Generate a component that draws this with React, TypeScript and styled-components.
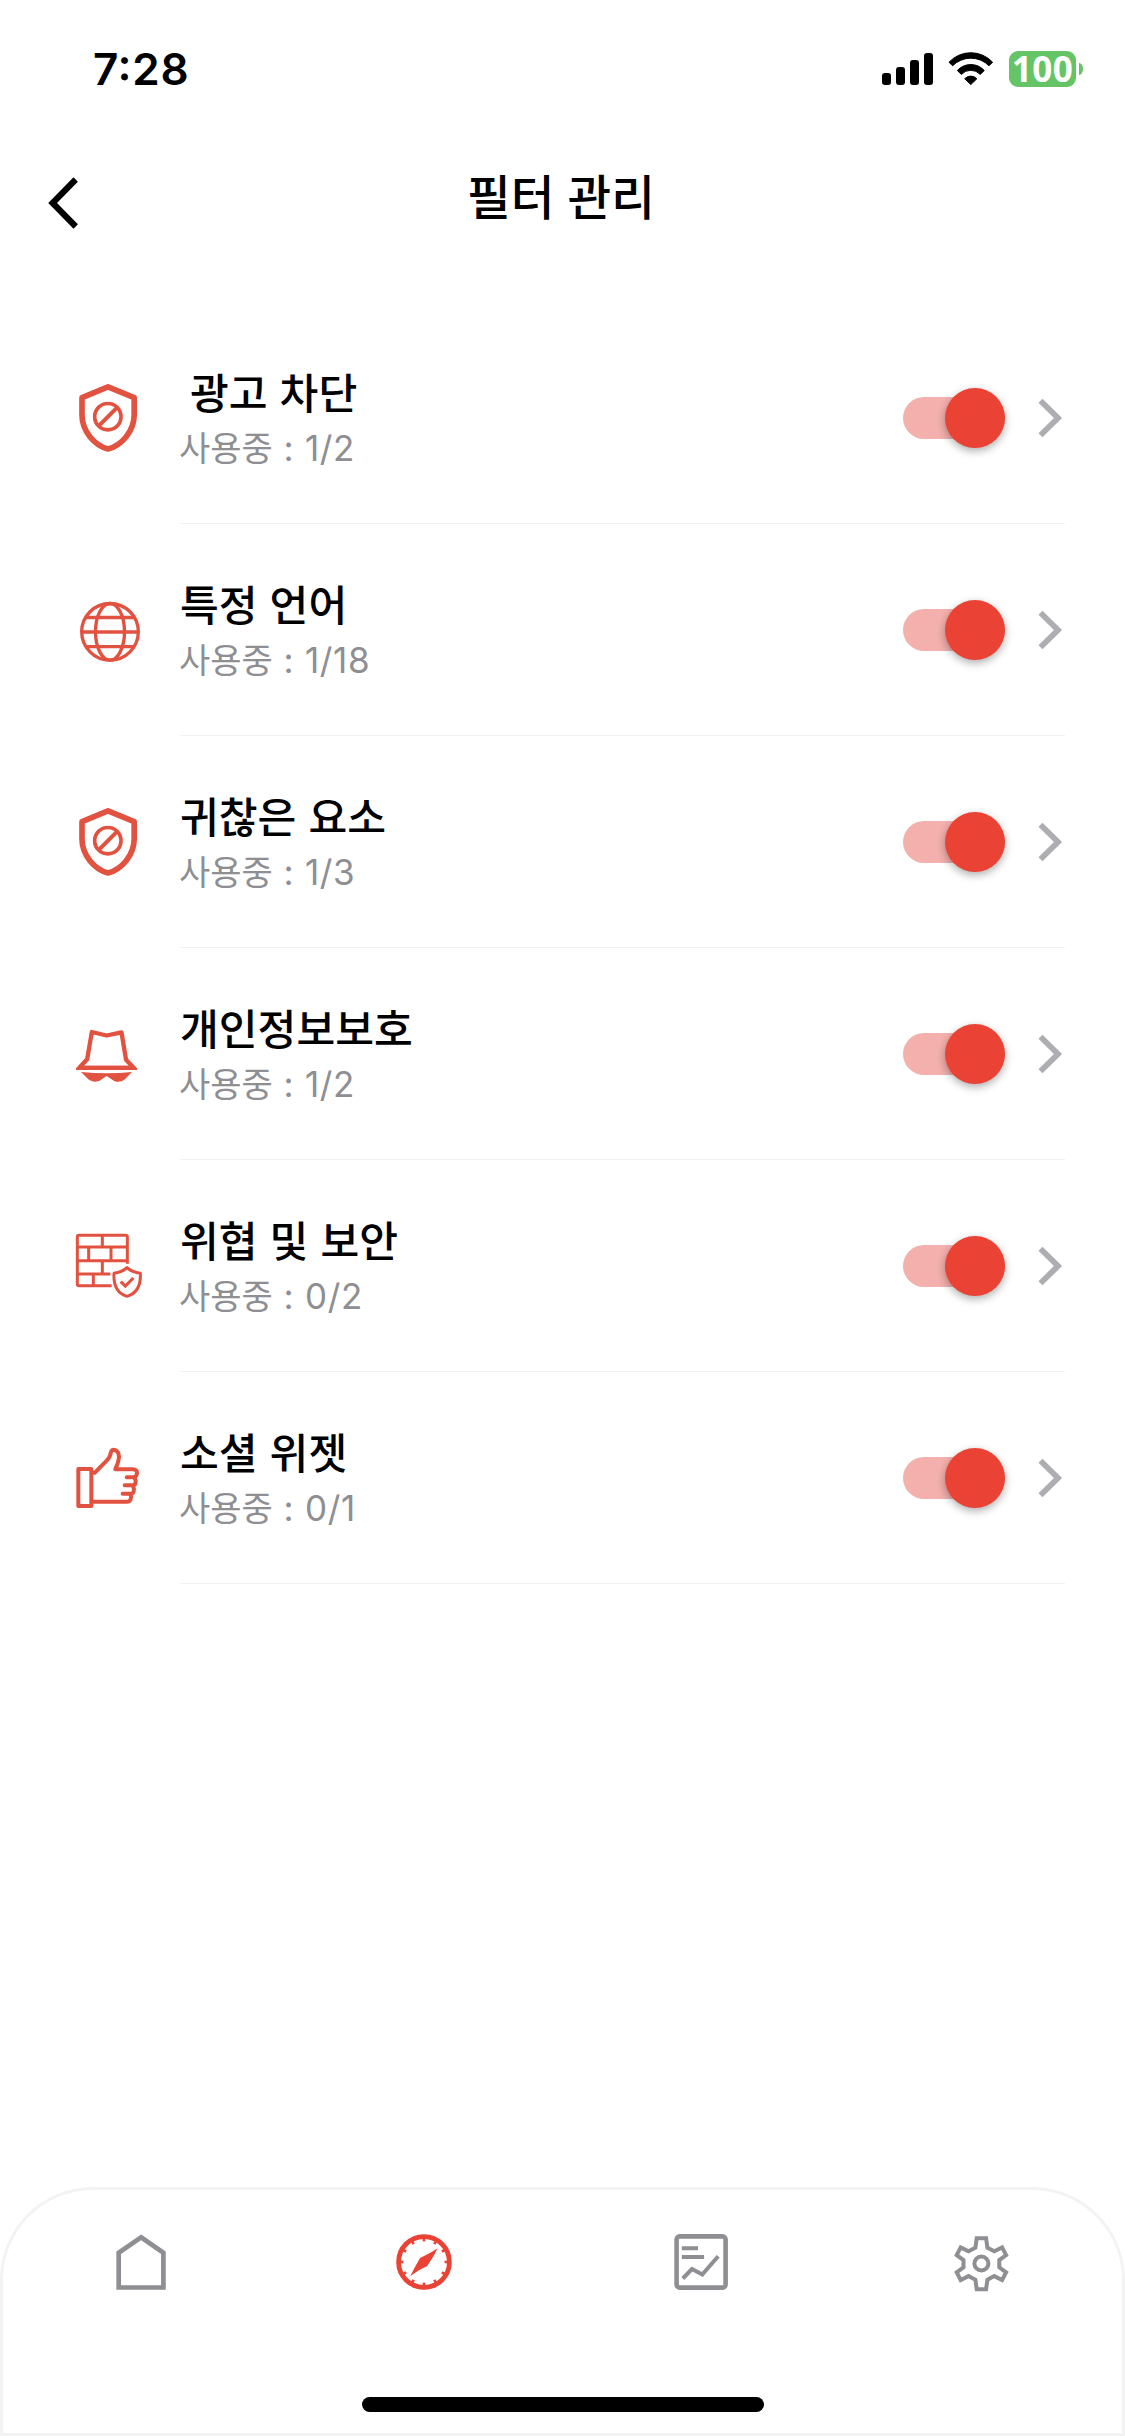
import React, { useState } from "react";
import styled, { createGlobalStyle } from "styled-components";

const GlobalStyle = createGlobalStyle`
  * { box-sizing: border-box; }
  body { margin: 0; background: #fff; }
`;

const accent = "#ea4335";
const iconRed = "#e25240";
const grey = "#8e8e93";

const Screen = styled.div`
  width: 1125px;
  height: 2436px;
  display: flex;
  flex-direction: column;
  background: #fff;
  color: #000;
  overflow: hidden;
  font-family: Inter, "Noto Sans CJK KR", sans-serif;
`;

const StatusBar = styled.div`
  height: 138px;
  padding: 0 42px 0 93px;
  display: flex;
  justify-content: space-between;
  align-items: center;
`;

const Clock = styled.span`
  font-size: 44px;
  font-weight: 600;
  line-height: 50px;
  letter-spacing: 0.7px;
  font-feature-settings: "case";
`;

const StatusIcons = styled.div`
  display: flex;
  align-items: center;
`;

const Signal = styled.div`
  display: flex;
  align-items: flex-end;
  gap: 5px;
  margin-right: 15px;
`;

const Bar = styled.i<{ $h: number }>`
  width: 9px;
  height: ${(p) => p.$h}px;
  border-radius: 3px;
  background: #000;
`;

const Battery = styled.div`
  margin-left: 15px;
  width: 67px;
  height: 36px;
  border-radius: 9px;
  background: #65c466;
  color: #fff;
  font-family: "Open Sans", sans-serif;
  font-size: 35px;
  font-weight: 700;
  line-height: 36px;
  letter-spacing: 0.4px;
  text-align: center;
`;

const BatteryTip = styled.i`
  margin-left: 3px;
  width: 4px;
  height: 12px;
  border-radius: 0 4px 4px 0 / 0 6px 6px 0;
  background: #65c466;
`;

const Header = styled.header`
  height: 174px;
  padding: 0 48px;
  display: grid;
  grid-template-columns: 60px 1fr 60px;
  align-items: start;
`;

const BackButton = styled.button`
  margin: 38px 0 0;
  padding: 0;
  border: 0;
  width: 32px;
  height: 54px;
  background: none;
  svg { display: block; }
`;

const PageTitle = styled.h1`
  margin: 28px 0 0;
  padding-right: 3px;
  text-align: center;
  font-family: "Noto Sans CJK KR", sans-serif;
  font-size: 47.5px;
  line-height: 58px;
  font-weight: 500;
  word-spacing: 2.5px;
`;

const List = styled.main`
  flex: 1;
  padding: 0 60px 0 72px;
`;

const Row = styled.section`
  height: 212px;
  display: grid;
  grid-template-columns: 72px 885px;
  column-gap: 36px;
  align-items: center;
`;

const RowIcon = styled.svg`
  width: 72px;
  height: 72px;
  fill: none;
  stroke: ${iconRed};
  stroke-linejoin: round;
`;

const RowBody = styled.div`
  height: 212px;
  border-bottom: 1px solid #f2f2f2;
  display: flex;
  align-items: center;
`;

const Labels = styled.div`
  flex: 1;
  height: 212px;
  padding-top: 54px;
`;

const Name = styled.div<{ $indent?: boolean }>`
  padding-left: ${(p) => (p.$indent ? 10 : 0)}px;
  font-family: "Noto Sans CJK KR", sans-serif;
  font-size: 42.2px;
  font-weight: 500;
  line-height: 50px;
  word-spacing: 2.5px;
  white-space: nowrap;
`;

const Usage = styled.div`
  display: flex;
  align-items: baseline;
  margin-top: 6px;
  color: ${grey};
  font-size: 35px;
  line-height: 50px;
  white-space: pre;
`;

const UsageLabel = styled.span`
  font-family: "Noto Sans CJK KR", sans-serif;
  font-size: 34px;
  margin-left: -1px;
`;

const UsageCount = styled.span`
  letter-spacing: 0.6px;
  word-spacing: 0.3px;
`;

const Track = styled.button<{ $on: boolean }>`
  padding: 0;
  border: 0;
  width: 102px;
  height: 42px;
  border-radius: 21px;
  display: flex;
  align-items: center;
  justify-content: ${(p) => (p.$on ? "flex-end" : "flex-start")};
  background: ${(p) => (p.$on ? "#f3b0ad" : "#d1d1d6")};
`;

const Thumb = styled.i<{ $on: boolean }>`
  width: 60px;
  height: 60px;
  flex: none;
  border-radius: 50%;
  background: ${(p) => (p.$on ? accent : "#fff")};
  box-shadow: 0 3px 9px rgba(0, 0, 0, 0.32);
`;

const Chevron = styled.svg`
  width: 27px;
  height: 42px;
  margin: 0 1px 0 32px;
  fill: none;
  stroke: #aeaeb2;
  stroke-width: 5.8;
`;

const TabBar = styled.nav`
  height: 249px;
  border: 3px solid #f3f3f3;
  border-radius: 93px 93px 0 0;
  display: flex;
  flex-direction: column;
  align-items: center;
  justify-content: space-between;
  padding: 42px 0 21px;
`;

const Tabs = styled.div`
  align-self: flex-start;
  display: flex;
  gap: 220px;
  padding-left: 109px;
`;

const TabIcon = styled.svg<{ $active?: boolean }>`
  width: 60px;
  height: 60px;
  display: block;
  fill: none;
  color: ${(p) => (p.$active ? accent : grey)};
  stroke: currentColor;
`;

const HomeIndicator = styled.div`
  width: 402px;
  height: 15px;
  border-radius: 8px;
  background: #000;
`;

const ShieldIcon = () => (
  <RowIcon viewBox="66 96 216 216">
    <path d="M174 110.500 L252.500 143 V196 C252.500 243 215 286 174 297 C133 286 96 243 96 196 V143 Z" strokeWidth="17" />
    <circle cx="173.500" cy="200" r="39.500" strokeWidth="11" />
    <path d="M147 227 L201 173" strokeWidth="12" />
  </RowIcon>
);

const GlobeIcon = () => (
  <RowIcon viewBox="66 102 216 216" strokeWidth="10">
    <circle cx="180" cy="215.500" r="85" />
    <ellipse cx="180" cy="215.500" rx="43.500" ry="85" />
    <path d="M107 172.500 H253 M94 216 H266 M107 260 H253" />
  </RowIcon>
);

const HatIcon = () => (
  <RowIcon viewBox="66 114 216 216">
    <path d="M125.500 156 L170 166.500 L214.500 157 L228 239 L251 263.500 H88 L111.500 238 Z" strokeWidth="13" />
    <path d="M78 264 V270 H261 V264 L250 257 H89 Z" fill={iconRed} stroke="none" />
    <path d="M93 276 Q132 280 170 280 Q208 280 246 276 L225 298 C214 307 200 308 189 301 L170 288 L151 301 C140 308 125 306 115 298 Z" fill={iconRed} stroke="none" />
  </RowIcon>
);

const FirewallIcon = () => (
  <RowIcon viewBox="66 120 216 216" strokeWidth="9">
    <path d="M232 221 V141 Q232 136 227 136 H87 Q82 136 82 141 V282 Q82 287 87 287 H185" />
    <path d="M82 171 H232 M82 212 H232 M82 252 H181 M157 136 V171 M116 171 V212 M183 171 V212 M157 212 V252 M130 252 V287" />
    <path d="M231 233 C221 243 206 248 192 250 C190 284 201 310 231 319 C261 310 273 284 271 250 C257 248 241 243 231 233 Z" />
    <path d="M212 275 L226 288 L250 264" strokeWidth="9.500" strokeLinejoin="miter" />
  </RowIcon>
);

const ThumbIcon = () => (
  <RowIcon viewBox="66 126 216 216" strokeWidth="12" strokeLinecap="round">
    <rect x="85" y="207" width="39" height="111" />
    <path d="M130 218.500 L134 218.500 L170 182 Q181 171 183 156 Q185 149 191 149 C205 150 210 166 205 183 Q202 196 196 206.500 L196 207.500 H248 C258 208 262 213 261 220 C260 228 257 232 250 232 H230 M252 232 C260 240 258 256 248 256 H224 M248 257 C254 266 253 281 243 281 H218 M242 282 C246 294 241 305.500 231 305.500 H130" />
  </RowIcon>
);

interface Filter {
  name: string;
  usage: string;
  icon: React.ReactNode;
  indent?: boolean;
}

const filters: Filter[] = [
  { name: "광고 차단", usage: "1/2", icon: <ShieldIcon />, indent: true },
  { name: "특정 언어", usage: "1/18", icon: <GlobeIcon /> },
  { name: "귀찮은 요소", usage: "1/3", icon: <ShieldIcon /> },
  { name: "개인정보보호", usage: "1/2", icon: <HatIcon /> },
  { name: "위협 및 보안", usage: "0/2", icon: <FirewallIcon /> },
  { name: "소셜 위젯", usage: "0/1", icon: <ThumbIcon /> },
];

function FilterRow({ name, usage, icon, indent }: Filter) {
  const [on, setOn] = useState(true);
  return (
    <Row>
      {icon}
      <RowBody>
        <Labels>
          <Name $indent={indent}>{name}</Name>
          <Usage>
            <UsageLabel>사용중</UsageLabel>
            <UsageCount> : {usage}</UsageCount>
          </Usage>
        </Labels>
        <Track $on={on} onClick={() => setOn(!on)}>
          <Thumb $on={on} />
        </Track>
        <Chevron viewBox="0 0 27 42">
          <path d="M3.500 3.700 L21 21 L3.500 38.300" />
        </Chevron>
      </RowBody>
    </Row>
  );
}

const gearOutline =
  "M-4.700 -25.500 L4.700 -25.500 L6 -16 L12.900 -12.400 L20.700 -16.300 L24.700 -8.600 L17.900 -3.600 L17.900 3.600 L24.700 8.600 L20.700 16.300 L12.900 12.400 L6 16 L4.700 25.500 L-4.700 25.500 L-6 16 L-12.900 12.400 L-20.700 16.300 L-24.700 8.600 L-17.900 3.600 L-17.900 -3.600 L-24.700 -8.600 L-20.700 -16.300 L-12.900 -12.400 L-6 -16 Z";

export default function App() {
  return (
    <Screen>
      <GlobalStyle />
      <StatusBar>
        <Clock>7:28</Clock>
        <StatusIcons>
          <Signal>
            <Bar $h={12} />
            <Bar $h={18} />
            <Bar $h={25} />
            <Bar $h={32} />
          </Signal>
          <svg width="46" height="34" viewBox="0 0 46 34" stroke="#000" strokeWidth="1" strokeLinejoin="round">
            <path d="M1 10.200 A29.800 29.800 0 0 1 44.600 10.200 L41 13.800 A25.500 25.500 0 0 0 4.600 13.800 Z" />
            <path d="M9.300 18.500 A18.200 18.200 0 0 1 36.300 18.500 L32.200 22.400 A12.800 12.800 0 0 0 13.400 22.400 Z" />
            <path d="M16.700 26.700 A8.500 8.500 0 0 1 28.900 26.700 L22.800 32.600 Z" />
          </svg>
          <Battery>100</Battery>
          <BatteryTip />
        </StatusIcons>
      </StatusBar>

      <Header>
        <BackButton aria-label="뒤로">
          <svg width="32" height="54" viewBox="0 0 32 54" fill="none" stroke="#000" strokeWidth="6.200">
            <path d="M27.700 3.500 L4.600 27 L27.700 50.500" />
          </svg>
        </BackButton>
        <PageTitle>필터 관리</PageTitle>
      </Header>

      <List>
        {filters.map((f) => (
          <FilterRow key={f.name} {...f} />
        ))}
      </List>

      <TabBar>
        <Tabs>
          <TabIcon viewBox="0 0 60 60" strokeWidth="4.700">
            <path d="M29.100 5.300 L51.400 20.800 V55.500 H6.700 V20.800 Z" />
          </TabIcon>
          <TabIcon viewBox="0 0 60 60" $active>
            <circle cx="32" cy="30" r="25.400" strokeWidth="4.800" />
            {Array.from({ length: 12 }, (_, i) => (
              <path key={i} d="M32 6 V9.400" strokeWidth="2.600" transform={`rotate(${i * 30} 32 30)`} />
            ))}
            <path d="M45.600 16.200 C42 24 38 30 34.900 34.300 C29 37 24 40 18.300 44 C22 37 25 31 28.100 26 C34 23 40 20 45.600 16.200 Z" fill="currentColor" stroke="none" />
          </TabIcon>
          <TabIcon viewBox="0 0 60 60" strokeWidth="4.600">
            <rect x="4.600" y="4.400" width="49" height="51.200" rx="3" />
            <path d="M9.800 16.200 H26 M9.800 24.900 H32.100" strokeWidth="4" />
            <path d="M10.800 46.500 L20 37 L30.300 42.500 L46.200 24.300" strokeWidth="4" />
          </TabIcon>
          <TabIcon viewBox="0 0 60 60" strokeWidth="4">
            <path d={gearOutline} transform="translate(29.400 31.700)" />
            <circle cx="29.400" cy="31.500" r="7" />
          </TabIcon>
        </Tabs>
        <HomeIndicator />
      </TabBar>
    </Screen>
  );
}
